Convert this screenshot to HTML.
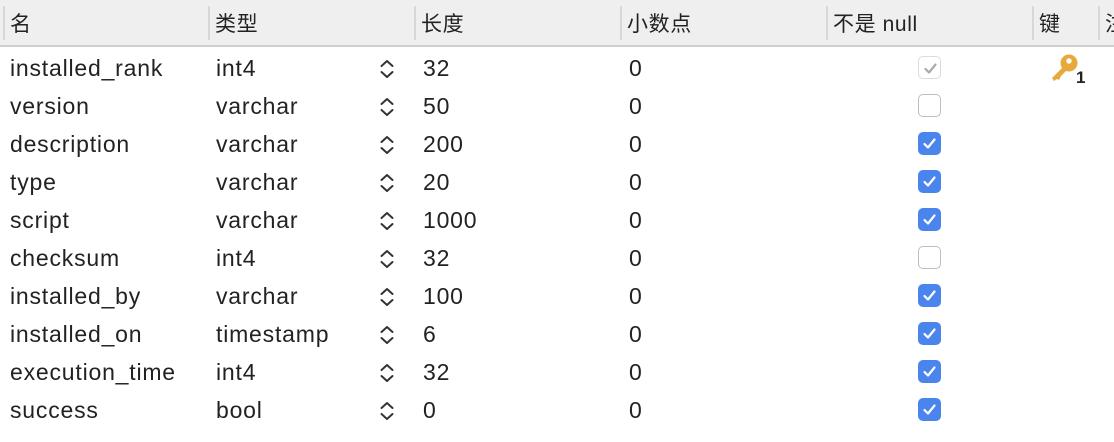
<!DOCTYPE html>
<html><head><meta charset="utf-8"><style>
body{margin:0;width:1114px;height:442px;background:#fff;overflow:hidden;font-family:"Liberation Sans","Noto Sans CJK SC",sans-serif;font-size:23px;color:#222;position:relative}
.hdr{position:absolute;left:0;top:0;width:1114px;height:45px;background:#efefef;border-bottom:2px solid #cfcfcf}
.sep{position:absolute;top:6px;width:2px;height:34px;background:#d8d8d8}
.ht{position:absolute;top:8px;font-size:21px;color:#222;letter-spacing:0.6px}
.c{position:absolute;line-height:38px;height:38px;letter-spacing:0.8px}
.cb{position:absolute;width:23px;height:23px;border-radius:5px;box-sizing:border-box}
.on{background:#4a85ee}
.off{border:1.5px solid #bdbdbd;background:#fff}
.dis{border:1.5px solid #dcdcdc;background:#fff}
</style></head><body>
<div class="hdr">
<div class="sep" style="left:3px"></div><div class="sep" style="left:208px"></div><div class="sep" style="left:414px"></div><div class="sep" style="left:620px"></div><div class="sep" style="left:826px"></div><div class="sep" style="left:1032px"></div><div class="sep" style="left:1098px"></div>
<div class="ht" style="left:10px">名</div><div class="ht" style="left:215px">类型</div><div class="ht" style="left:421px">长度</div><div class="ht" style="left:627px">小数点</div><div class="ht" style="left:833px">不是 null</div><div class="ht" style="left:1039px">键</div><div class="ht" style="left:1105px">注</div>
</div>
<div id="rows"></div>
<script>
const d=[["installed_rank","int4","32","d"],["version","varchar","50","o"],["description","varchar","200","c"],["type","varchar","20","c"],["script","varchar","1000","c"],["checksum","int4","32","o"],["installed_by","varchar","100","c"],["installed_on","timestamp","6","c"],["execution_time","int4","32","c"],["success","bool","0","c"]];
let h="";
d.forEach((r,i)=>{const t=49+i*38;
h+=`<div class="c" style="left:10px;top:${t}px">${r[0]}</div><div class="c" style="left:216px;top:${t}px">${r[1]}</div>
<svg style="position:absolute;left:378px;top:${t+8}px" width="18" height="24" viewBox="0 0 18 24"><path d="M3.5 9 L9 4 L14.5 9 M3.5 15 L9 20 L14.5 15" fill="none" stroke="#333" stroke-width="2" stroke-linecap="round" stroke-linejoin="round"/></svg>
<div class="c" style="left:423px;top:${t}px">${r[2]}</div><div class="c" style="left:629px;top:${t}px">0</div>`;
const cls=r[3]=="c"?"on":r[3]=="o"?"off":"dis";
const ck=r[3]=="c"?"#fff":"#aaa";
h+=`<div class="cb ${cls}" style="left:918px;top:${t+7}px">${r[3]!="o"?`<svg width="23" height="23" viewBox="0 0 23 23"><path d="M6.5 12 L10 15.5 L16.5 7.5" fill="none" stroke="${ck}" stroke-width="2.2" stroke-linecap="round" stroke-linejoin="round"/></svg>`:""}</div>`;
});
document.getElementById("rows").innerHTML=h;
</script>
<svg style="position:absolute;left:1049px;top:52px" width="40" height="34" viewBox="0 0 40 34"><circle cx="20" cy="11" r="8.5" fill="#e7a93a"/><circle cx="20" cy="9" r="2.7" fill="#fff"/><path d="M14 15 L3 26 L5 29 L8 27 L10 28 L12 24 L18 18 Z" fill="#e7a93a"/><text x="27" y="31" font-family="Liberation Sans" font-weight="bold" font-size="17" fill="#222">1</text></svg>
</body></html>
